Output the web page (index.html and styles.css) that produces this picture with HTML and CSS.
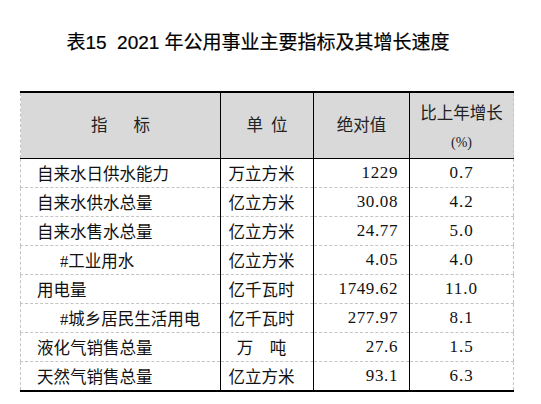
FILE: index.html
```html
<!DOCTYPE html>
<html>
<head>
  <meta charset="UTF-8">
  <title>表15 2021年公用事业主要指标及其增长速度</title>
  <link rel="stylesheet" href="styles.css">
</head>

<body>
  <h1 class="title">表15&nbsp; 2021 年公用事业主要指标及其增长速度</h1>

  <table class="stats">
    <colgroup>
      <col class="c-name">
      <col class="c-unit">
      <col class="c-value">
      <col class="c-growth">
    </colgroup>
    <thead>
      <tr>
        <th class="h-name">指标</th>
        <th class="h-unit">单位</th>
        <th>绝对值</th>
        <th class="h-growth">比上年增长<br><span class="pct">(%)</span></th>
      </tr>
    </thead>
    <tbody>
      <tr><td class="name">自来水日供水能力</td><td class="unit">万立方米</td><td class="num">1229</td><td class="rate">0.7</td></tr>
      <tr><td class="name">自来水供水总量</td><td class="unit">亿立方米</td><td class="num">30.08</td><td class="rate">4.2</td></tr>
      <tr><td class="name">自来水售水总量</td><td class="unit">亿立方米</td><td class="num">24.77</td><td class="rate">5.0</td></tr>
      <tr><td class="name sub">#工业用水</td><td class="unit">亿立方米</td><td class="num">4.05</td><td class="rate">4.0</td></tr>
      <tr><td class="name">用电量</td><td class="unit">亿千瓦时</td><td class="num">1749.62</td><td class="rate">11.0</td></tr>
      <tr><td class="name sub">#城乡居民生活用电</td><td class="unit">亿千瓦时</td><td class="num">277.97</td><td class="rate">8.1</td></tr>
      <tr><td class="name">液化气销售总量</td><td class="unit">万　吨</td><td class="num">27.6</td><td class="rate">1.5</td></tr>
      <tr><td class="name">天然气销售总量</td><td class="unit">亿立方米</td><td class="num">93.1</td><td class="rate">6.3</td></tr>
    </tbody>
  </table>
</body>
</html>
```

FILE: styles.css
```css
/* page */
body {
  margin: 0;
  background: #fff;
  color: #111;
  font-family: "Liberation Serif", "Noto Sans CJK SC", serif;
}

.title {
  margin: 0;
  padding: 31px 25px 0 0;
  height: 60px;
  text-align: center;
  font-family: "Liberation Sans", "Noto Sans CJK SC", sans-serif;
  font-size: 19px;
  font-weight: normal;
  line-height: 24px;
  color: #000;
  -webkit-text-stroke: 0.2px #000;  /* heiti look, between regular and bold */
}

/* table */
.stats {
  margin-left: 20px;
  width: 493px;
  table-layout: fixed;
  border-collapse: collapse;
  border-top: 2px solid #000;
  border-bottom: 2px solid #000;
  border-left: 1px dashed #c4c4c4;
  border-right: 1px dashed #c4c4c4;
  font-size: 16.5px;
}
.c-name   { width: 200px; }
.c-unit   { width: 93px; }
.c-value  { width: 96px; }
.c-growth { width: 104px; }

.stats th {
  height: 59px;
  padding: 0;
  background: #d9d9d9;
  font-weight: normal;
  color: #222;
  border-bottom: 1px solid #000;
  border-left: 1px solid #000;
  line-height: 28px;
}
.stats th:first-child { border-left: 1px dashed #c4c4c4; }
.h-name  { letter-spacing: 26px; padding-left: 26px !important; }
.h-unit  { letter-spacing: 8px; padding-left: 8px !important; }
.h-growth { padding-top: 6px !important; }
.pct { font-size: 14px; }

.stats td {
  height: 28px;
  padding: 0;
  border-bottom: 1px dashed #c4c4c4;
  border-left: 1px solid #000;
  white-space: nowrap;
}
.stats td:first-child { border-left: 1px dashed #c4c4c4; }
.stats tr:last-child td { border-bottom: 2px solid #000; }

.name { padding-left: 16px !important; }
.name.sub { padding-left: 39px !important; }
.unit { text-align: center; padding-right: 11px !important; }
.num  { text-align: right; padding-right: 11px !important; font-size: 17px; letter-spacing: 0.6px; }
.rate { text-align: center; font-size: 17px; letter-spacing: 1px; }
```
